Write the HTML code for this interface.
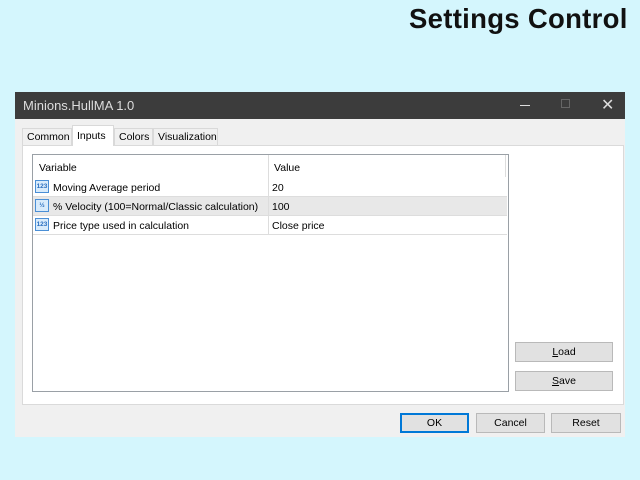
<!DOCTYPE html>
<html><head><style>
*{margin:0;padding:0;box-sizing:border-box}
body{width:640px;height:480px;background:#d4f6fd;position:relative;font-family:"Liberation Sans",sans-serif;font-size:10.5px;color:#000;overflow:hidden}
.a{position:absolute}
.title{left:409px;top:3px;font-size:27.5px;font-weight:bold;color:#111;letter-spacing:0.3px}
.win{left:15px;top:92px;width:610px;height:345px;background:#f0f0f0}
.tb{left:15px;top:92px;width:610px;height:27px;background:#3c3c3c;color:#ddd;font-size:13px;padding:6px 0 0 8px}
.tab{top:128px;height:17px;border:1px solid #d9d9d9;border-bottom:none;background:#f0f0f0;padding:2px 0 0 4px}
.panel{left:22px;top:145px;width:602px;height:260px;background:#fff;border:1px solid #dadada}
.grid{left:32px;top:154px;width:477px;height:238px;border:1px solid #9aa0a6;background:#fff}
.row{position:absolute;left:0;width:474px;height:19px;border-bottom:1px solid #ddd}
.row span{position:absolute;top:4px}
.ic{position:absolute;left:2px;top:2px;width:14px;height:13px;border:1px solid #4a8fd6;background:#d8ebfb;color:#2a6fc0;font-size:6.5px;line-height:11px;text-align:center;font-weight:bold}
.btn{height:20px;border:1px solid #b9b9b9;background:#e1e1e1;text-align:center;padding-top:3px}
</style></head><body>
<div class="a title">Settings Control</div>
<div class="a win"></div>
<div class="a tb">Minions.HullMA 1.0
<span class="a" style="left:505px;top:13px;width:10px;height:1px;background:#ddd"></span>
<span class="a" style="left:546px;top:7px;width:9px;height:9px;border:1px solid #666"></span>
<span class="a" style="left:586px;top:3px;font-size:16px;color:#ddd">✕</span></div>
<div class="a panel"></div>
<div class="a tab" style="left:22px;width:50px">Common</div>
<div class="a tab" style="left:72px;width:42px;top:125px;height:21px;background:#fff;padding-top:4px">Inputs</div>
<div class="a tab" style="left:114px;width:39px">Colors</div>
<div class="a tab" style="left:153px;width:65px">Visualization</div>
<div class="a grid">
<div class="row" style="top:0;height:24px;border-bottom:none"><span style="left:6px;top:7px">Variable</span><span style="left:241px;top:7px">Value</span></div>
<div class="a" style="left:472px;top:0;width:1px;height:22px;background:#ddd"></div>
<div class="row" style="top:23px"><div class="ic">123</div><span style="left:20px">Moving Average period</span><span style="left:239px">20</span></div>
<div class="row" style="top:42px;background:#e8e8e8"><div class="ic">½</div><span style="left:20px">% Velocity (100=Normal/Classic calculation)</span><span style="left:239px">100</span></div>
<div class="row" style="top:61px"><div class="ic">123</div><span style="left:20px">Price type used in calculation</span><span style="left:239px">Close price</span></div>
<div class="a" style="left:235px;top:0;width:1px;height:80px;background:#ddd"></div>
</div>
<div class="a btn" style="left:515px;top:342px;width:98px"><u>L</u>oad</div>
<div class="a btn" style="left:515px;top:371px;width:98px"><u>S</u>ave</div>
<div class="a btn" style="left:400px;top:413px;width:69px;border:2px solid #0078d7;padding-top:2px">OK</div>
<div class="a btn" style="left:476px;top:413px;width:69px">Cancel</div>
<div class="a btn" style="left:551px;top:413px;width:70px">Reset</div>
</body></html>
